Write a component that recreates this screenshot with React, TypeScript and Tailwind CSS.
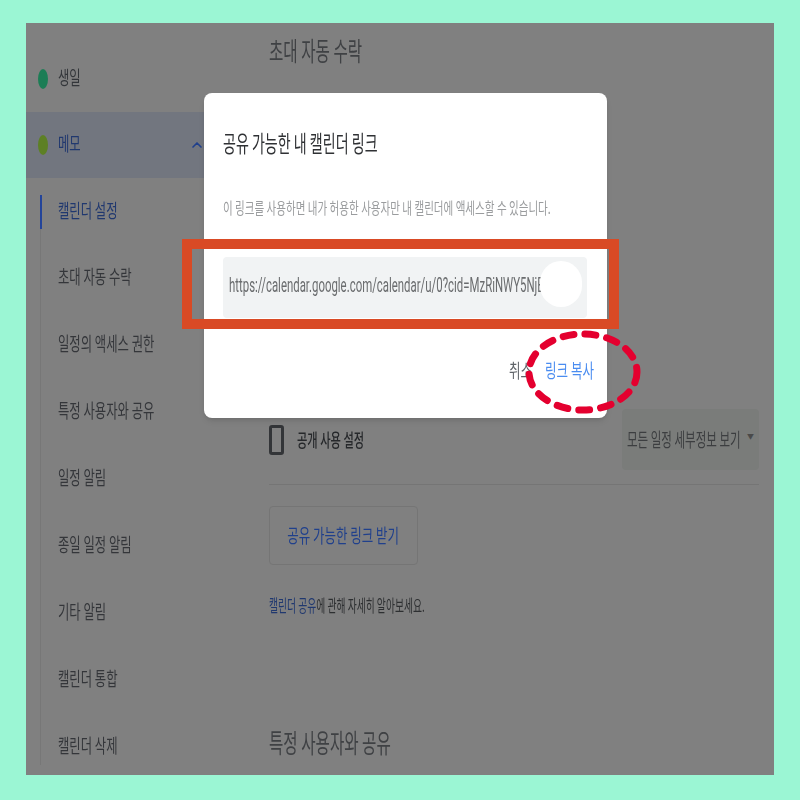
import { ChevronUp } from 'lucide-react';

const font = { fontFamily: '"Noto Sans CJK KR", "Noto Sans", sans-serif' };

const sideItems = ['초대 자동 수락', '일정의 액세스 권한', '특정 사용자와 공유', '일정 알림', '종일 일정 알림', '기타 알림', '캘린더 통합', '캘린더 삭제'];

// the screenshot was squeezed sideways, so every text gets a horizontal scale
function Squeezed({ children, className = '' }: { children: React.ReactNode; className?: string }) {
  return <span className={`inline-block origin-left whitespace-nowrap blur-[0.6px] ${className}`}>{children}</span>;
}

function Sidebar() {
  return (
    <aside className="w-[232px] shrink-0 pt-[22px]">
      <div className="flex h-[67px] items-center gap-[10px] pl-3">
        <span className="h-5 w-[10px] rounded-[50%] bg-[#1c7d55]" />
        <Squeezed className="scale-x-[0.65] pb-[3px] text-[19px] text-[#33363a]">생일</Squeezed>
      </div>
      <div className="flex h-[66px] items-center gap-[10px] rounded-r-lg bg-[#72767f] pl-3 pr-[53px]">
        <span className="h-5 w-[10px] rounded-[50%] bg-[#5d8025]" />
        <Squeezed className="scale-x-[0.65] pb-[3px] text-[19px] text-[#20386f]">메모</Squeezed>
        <ChevronUp className="ml-auto text-[#20408c]" size={16} strokeWidth={2.5} />
      </div>
      <div className="ml-[14px] mt-[17px] h-[570px] border-l border-[#777777]">
        <div className="-ml-[1px] flex h-[34px] items-center border-l-2 border-[#23449a] pl-[16px]">
          <Squeezed className="scale-x-[0.65] pb-[3px] text-[19px] text-[#20386f]">캘린더 설정</Squeezed>
        </div>
        {sideItems.map((item, i) => (
          <div key={item} className={`flex h-[67px] items-center pl-[17px] ${i === 0 ? 'mt-[15px]' : ''}`}>
            <Squeezed className="scale-x-[0.65] pb-[2px] text-[19px] text-[#34363a]">{item}</Squeezed>
          </div>
        ))}
      </div>
    </aside>
  );
}

function Content() {
  return (
    <main className="flex-1 pl-[11px] pr-[15px]">
      <h2 className="mt-[11px] h-[32px] text-[26px] leading-[32px] text-[#3f4144]"><Squeezed className="scale-x-[0.6]">초대 자동 수락</Squeezed></h2>
      <div className="mt-[343px] flex h-[76px] items-start justify-between border-b border-[#757575]">
        <div className="flex h-[61px] items-center gap-[13px]">
          <span className="h-[30px] w-[15px] rounded-[3px] border-[3px] border-[#333538]" />
          <Squeezed className="scale-x-[0.625] text-[18px] font-medium text-[#26282b]">공개 사용 설정</Squeezed>
        </div>
        <div className="relative flex h-[61px] w-[137px] items-center rounded bg-[#7a7c7a] pl-[5px]">
          <Squeezed className="scale-x-[0.606] text-[19px] text-[#3c3e40]">모든 일정 세부정보 보기</Squeezed>
          <span className="absolute right-[5px] top-[22px] text-[7px] text-[#4a4a4a]">▼</span>
        </div>
      </div>
      <div className="mt-[21px] flex h-[59px] w-[149px] items-center justify-center rounded border border-[#757575]">
        <span className="inline-block scale-x-[0.657] whitespace-nowrap text-[19px] text-[#20408c] blur-[0.6px]">공유 가능한 링크 받기</span>
      </div>
      <p className="mt-[29px] h-[22px] text-[17px] leading-[22px] text-[#2d2f31]">
        <Squeezed className="scale-x-[0.576]"><span className="text-[#20386f]">캘린더 공유</span>에 관해 자세히 알아보세요.</Squeezed>
      </p>
      <h2 className="mt-[110px] h-[32px] text-[26px] leading-[32px] text-[#3f4144]"><Squeezed className="scale-x-[0.6]">특정 사용자와 공유</Squeezed></h2>
    </main>
  );
}

function LinkDialog() {
  return (
    <div className="absolute left-[178px] top-[70px] h-[325px] w-[403px] rounded-lg bg-white px-[19px] shadow-md">
      <h3 className="mt-[35px] h-[28px] text-[23px] leading-[28px] text-[#2f3134]"><Squeezed className="scale-x-[0.61]">공유 가능한 내 캘린더 링크</Squeezed></h3>
      <p className="mt-[41px] h-[20px] text-[16px] leading-[20px] text-[#9a9c9e]"><Squeezed className="scale-x-[0.66]">이 링크를 사용하면 내가 허용한 사용자만 내 캘린더에 액세스할 수 있습니다.</Squeezed></p>
      <div className="mt-[40px] flex h-[61px] w-[364px] items-center overflow-hidden rounded bg-[#f1f3f4] pb-[6px] pl-[6px]">
        <span className="inline-block origin-left scale-x-[0.57] whitespace-nowrap text-[20px] text-[#6a6c6e] blur-[0.5px]" style={{ fontFamily: '"Roboto", sans-serif' }}>https://calendar.google.com/calendar/u/0?cid=MzRiNWY5NjE</span>
      </div>
      <div className="mt-[38px] -mr-[5px] flex items-center justify-end">
        <Squeezed className="w-[36px] scale-x-[0.66] text-[19px] text-[#5f6368]">취소</Squeezed>
        <Squeezed className="w-[48px] scale-x-[0.66] text-[19px] text-[#4a8cf0]">링크 복사</Squeezed>
      </div>
    </div>
  );
}

export default function App() {
  return (
    <div className="h-[800px] w-[800px] bg-[#9bf6d4] pl-[26px] pt-[23px]" style={font}>
      <div className="relative flex h-[752px] w-[748px] overflow-hidden bg-[#808080]">
        <Sidebar />
        <Content />
        <LinkDialog />
        {/* white blob that hides the rest of the link */}
        <span className="absolute left-[514px] top-[238px] h-[46px] w-[42px] rounded-full bg-white" />
        {/* hand-drawn markup on top of the screenshot */}
        <span className="absolute left-[156px] top-[216px] h-[90px] w-[437px] border-[10px] border-[#d94a25]" />
        <svg className="absolute left-[490px] top-[300px]" width="130" height="100" viewBox="0 0 130 100" fill="none">
          <ellipse cx="67" cy="49" rx="54" ry="38" stroke="#e4002f" strokeWidth="7" strokeLinecap="round" strokeDasharray="11 11" />
        </svg>
      </div>
    </div>
  );
}
